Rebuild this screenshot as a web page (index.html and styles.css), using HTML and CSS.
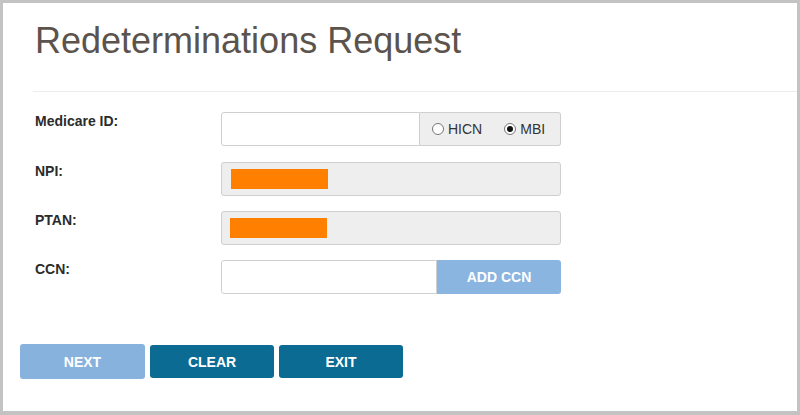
FILE: index.html
```html
<!DOCTYPE html>
<html>
<head>
<meta charset="utf-8">
<link rel="stylesheet" href="styles.css">
</head>
<body>
<div class="frame">
  <h1 class="title">Redeterminations Request</h1>
  <hr class="rule">
  <div class="form">
    <div class="label">Medicare ID:</div>
    <div class="group first">
      <div class="input grow"></div>
      <div class="addon">
        <span class="radio"></span><span class="rtext">HICN</span>
        <span class="radio checked"></span><span class="rtext">MBI</span>
      </div>
    </div>
    <div class="label">NPI:</div>
    <div class="input disabled"><span class="mask"></span></div>
    <div class="label">PTAN:</div>
    <div class="input disabled"><span class="mask shift"></span></div>
    <div class="label">CCN:</div>
    <div class="group">
      <div class="input grow"></div>
      <div class="addbtn">ADD CCN</div>
    </div>
  </div>
  <div class="actions">
    <div class="btn light">NEXT</div>
    <div class="btn dark">CLEAR</div>
    <div class="btn dark">EXIT</div>
  </div>
</div>
</body>
</html>
```
FILE: styles.css
```css
html, body {
  margin: 0;
  padding: 0;
  background: #fff;
}
.frame {
  box-sizing: border-box;
  width: 800px;
  height: 415px;
  border: 3px solid #c3c3c3;
  border-bottom-width: 4px;
  font-family: "Liberation Sans", Arial, sans-serif;
  overflow: hidden;
}
.title {
  margin: 0;
  padding: 18px 0 0 32px;
  font-size: 36px;
  line-height: 40px;
  font-weight: normal;
  color: #5b534c;
}
.rule {
  margin: 30px 0 0 30px;
  border: 0;
  border-top: 1px solid #ececec;
  height: 0;
}
.form {
  display: grid;
  grid-template-columns: 186px 340px;
  row-gap: 15px;
  padding: 20px 0 0 32px;
  align-items: start;
}
.label {
  font-size: 14px;
  line-height: 16px;
  font-weight: bold;
  color: #2b2b2b;
  margin-top: 1px;
}
.group {
  display: flex;
  height: 34px;
}
.group.first { margin-bottom: 1px; }
.input {
  box-sizing: border-box;
  height: 34px;
  border: 1px solid #cfcfcf;
  border-radius: 3px;
  background: #fff;
}
.group .input {
  border-radius: 3px 0 0 3px;
}
.grow { flex: 1; }
.disabled {
  background: #eeeeee;
  padding: 6px 0 0 9px;
}
.mask {
  display: block;
  width: 97px;
  height: 20px;
  background: #ff8000;
}
.mask.shift { margin-left: -1px; }
.addon {
  box-sizing: border-box;
  flex: 0 0 141px;
  height: 34px;
  border: 1px solid #cfcfcf;
  border-left: 0;
  border-radius: 0 3px 3px 0;
  background: #eeeeee;
  display: flex;
  align-items: center;
  padding-left: 12px;
  font-size: 14px;
  color: #333;
}
.radio {
  box-sizing: border-box;
  flex: 0 0 12px;
  width: 12px;
  height: 12px;
  border: 1px solid #777;
  border-radius: 50%;
  background: #fff;
  display: inline-flex;
  align-items: center;
  justify-content: center;
  margin-right: 4px;
}
.radio.checked::after {
  content: "";
  width: 6px;
  height: 6px;
  border-radius: 50%;
  background: #111;
}
.rtext { margin-right: 22px; }
.rtext:last-child { margin-right: 0; }
.addbtn {
  flex: 0 0 124px;
  height: 34px;
  box-sizing: border-box;
  background: #8ab5e0;
  border-radius: 0 3px 3px 0;
  color: #fff;
  font-size: 14px;
  font-weight: bold;
  display: flex;
  align-items: center;
  justify-content: center;
}
.actions {
  display: flex;
  align-items: flex-start;
  gap: 5px;
  padding: 50px 0 0 17px;
}
.btn {
  box-sizing: border-box;
  width: 124px;
  height: 33px;
  margin-top: 1px;
  border-radius: 3px;
  color: #fff;
  font-size: 14px;
  font-weight: bold;
  display: flex;
  align-items: center;
  justify-content: center;
}
.btn.light {
  width: 125px;
  height: 35px;
  margin-top: 0;
  background: #87b2de;
}
.btn.dark {
  background: #0b6b93;
}
```
